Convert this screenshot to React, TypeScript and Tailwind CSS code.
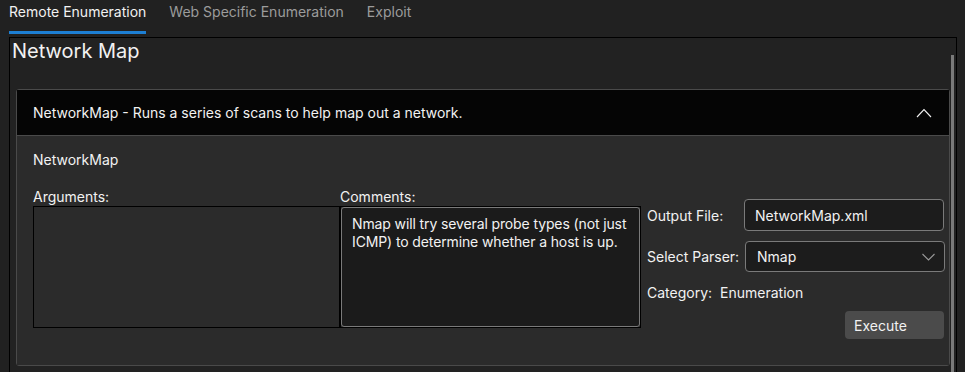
import { useState } from "react";

const tabs = ["Remote Enumeration", "Web Specific Enumeration", "Exploit"];

function ChevronUp() {
  return (
    <svg width="16" height="10" viewBox="0 0 16 10" fill="none">
      <path d="M1 9 L8 1.5 L15 9" stroke="#f2f2f2" strokeWidth="1.1" />
    </svg>
  );
}

function ChevronDown() {
  return (
    <svg width="13" height="8" viewBox="0 0 13 8" fill="none">
      <path d="M0.5 1 L6.5 7 L12.5 1" stroke="#9a9a9a" strokeWidth="1.1" />
    </svg>
  );
}

export default function App() {
  const [active, setActive] = useState(0);

  return (
    <div
      className="h-[372px] w-[965px] overflow-hidden bg-[#212121] text-[14px] text-[#f2f2f2]"
      style={{ fontFamily: "Inter, 'Noto Sans', sans-serif" }}
    >
      {/* tabs */}
      <div className="flex h-[37px] gap-[23px] pl-[9px]">
        {tabs.map((t, i) => (
          <button
            key={t}
            onClick={() => setActive(i)}
            className={
              "flex h-[34px] flex-col items-stretch pt-[3px] " +
              (i === active ? "text-[#f2f2f2]" : "text-[#9c9c9c]")
            }
          >
            <span className="h-[18px] leading-[18px]">{t}</span>
            <span
              className={
                "mt-auto h-[3px] w-full " +
                (i === active ? "bg-[#1d7fd3]" : "bg-transparent")
              }
            />
          </button>
        ))}
      </div>

      {/* panel */}
      <div className="ml-[9px] flex h-[340px] w-[948px] border border-black bg-[#222222]">
        <div className="flex flex-1 flex-col">
          <h1 className="pl-[2px] text-[20px] leading-[26px]">Network Map</h1>

          <div className="ml-[6px] mt-[25px] rounded-[3px] border border-[#4a4a4a]">
            {/* header */}
            <div className="flex h-[46px] items-center justify-between border-b border-[#4a4a4a] bg-[#050505] pl-[16px] pr-[17px]">
              <span>NetworkMap - Runs a series of scans to help map out a network.</span>
              <ChevronUp />
            </div>

            {/* body */}
            <div className="bg-[#2b2b2b] pb-[26px] pl-[16px] pt-[14px]">
              <div className="leading-[20px]">NetworkMap</div>

              <div className="mt-[18px] flex">
                <div className="flex w-[307px] flex-col">
                  <span className="h-[18px] leading-[18px]">Arguments:</span>
                  <div className="h-[122px] border border-black bg-[#2b2b2b]" />
                </div>

                <div className="flex w-[301px] flex-col">
                  <span className="h-[18px] leading-[18px]">Comments:</span>
                  <div className="h-[122px] border border-black">
                    <div className="h-full rounded-[3px] border border-[#7a7a7a] bg-[#1b1b1b] pl-[10px] pr-[2px] pt-[7px] leading-[18px] tracking-[-0.12px]">
                      Nmap will try several probe types (not just ICMP) to determine whether a host is up.
                    </div>
                  </div>
                </div>

                <div className="ml-[6px] mt-[11px] flex w-[298px] flex-col">
                  <div className="flex h-[32px] items-center">
                    <span className="w-[97px]">Output File:</span>
                    <div className="flex h-[32px] w-[200px] items-center rounded-[4px] border border-[#7a7a7a] bg-[#1c1c1c] px-[10px]">
                      NetworkMap.xml
                    </div>
                  </div>

                  <div className="mt-[10px] flex h-[31px] items-center">
                    <span className="w-[98px]">Select Parser:</span>
                    <div className="flex h-[31px] w-[200px] items-center justify-between rounded-[4px] border border-[#7a7a7a] bg-[#1c1c1c] pl-[11px] pr-[9px]">
                      <span>Nmap</span>
                      <ChevronDown />
                    </div>
                  </div>

                  <div className="mt-[10px] flex h-[20px] items-center gap-[8px]">
                    <span>Category:</span>
                    <span>Enumeration</span>
                  </div>

                  <div className="mt-[9px] flex justify-end pr-[1px]">
                    <button className="h-[28px] w-[99px] rounded-[4px] bg-[#4b4b4b] pl-[9px] text-left text-[#f2f2f2]">
                      Execute
                    </button>
                  </div>
                </div>
              </div>
            </div>
          </div>
        </div>

        {/* scrollbar */}
        <div className="w-[6px] pt-[17px]">
          <div className="ml-[1px] h-full w-[3px] bg-[#7a7a7a]" />
        </div>
      </div>
    </div>
  );
}
